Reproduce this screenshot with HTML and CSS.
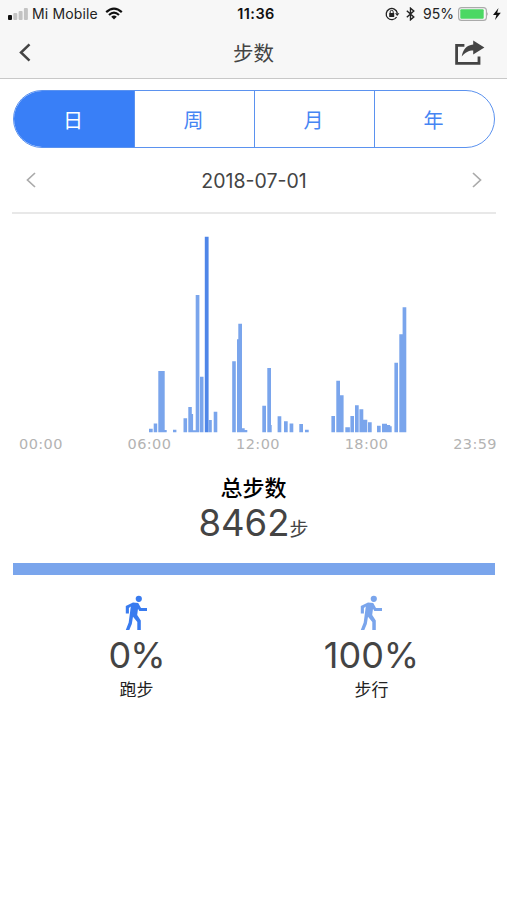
FILE: index.html
```html
<!DOCTYPE html>
<html lang="zh-CN">
<head>
<meta charset="utf-8">
<title>步数</title>
<link rel="stylesheet" href="styles.css">
</head>
<body>
<header class="top">
  <div class="status">
    <div class="status-left">
      <svg class="signal" width="20" height="12" viewBox="0 0 20 12"><rect x="0" y="7" width="4" height="5" rx="1" fill="#111"/><g fill="#c3c3c3"><rect x="5.3" y="5" width="4" height="7" rx="1"/><rect x="10.6" y="3" width="4" height="9" rx="1"/><rect x="15.9" y="0" width="4" height="12" rx="1"/></g></svg>
      <span class="carrier">Mi Mobile</span>
      <svg width="18" height="13" viewBox="0 0 18 13" fill="none" stroke="#111" stroke-width="2.2"><path d="M1.2 5.1Q9-2 16.8 5.1M4 8Q9 3.4 14 8"/><path d="M6.2 9.8Q9 7.4 11.8 9.8L9 12.6Z" fill="#111" stroke="none"/></svg>
    </div>
    <div class="clock">11:36</div>
    <div class="status-right">
      <svg width="15" height="14" viewBox="0 0 15 14" fill="none" stroke="#222"><path d="M11.6 10A5.6 5.6 0 1 1 12.3 6" stroke-width="1.3"/><path d="M10 6.2H14.4L12.2 9Z" fill="#222" stroke="none"/><rect x="4.2" y="6" width="5" height="4" fill="#222" stroke="none"/><path d="M5.2 6V4.8a1.5 1.5 0 0 1 3 0V6"/></svg>
      <svg class="bluetooth" width="9" height="14" viewBox="0 0 9 14" fill="none" stroke="#222" stroke-width="1.4"><path d="M.8 3.8L7.8 10L4.5 12.8V1.2L7.8 4L.8 10.2"/></svg>
      <span class="percent">95%</span>
      <svg class="battery" width="31" height="14" viewBox="0 0 31 14"><rect x=".6" y=".6" width="27.8" height="12.8" rx="3" fill="#f7f7f7" stroke="#aaa" stroke-width="1.1"/><rect x="2.3" y="2.3" width="23.4" height="9.4" rx="1" fill="#4bd863"/><path d="M29.3 5q1.5 2 0 4z" fill="#999"/></svg>
      <svg width="8" height="12" viewBox="0 0 8 12"><path d="M5.5 0L0 7H3.4L2 12L7.8 4.8H4.2Z" fill="#111"/></svg>
    </div>
  </div>
  <nav class="bar">
    <svg width="12" height="19" viewBox="0 0 12 19" fill="none" stroke="#444" stroke-width="2.5"><path d="M10.5 1.3L2 9.5L10.5 17.7"/></svg>
    <h1>步数</h1>
    <svg width="30" height="26" viewBox="0 0 30 26"><path d="M9.4 5.3H1.6V23.4H24V16.5" fill="none" stroke="#444" stroke-width="2.8"/><path d="M18.2.6L29.4 7.4L18.2 14.4V10.6C13.6 10.6 10.5 12.4 6.7 16.6C7.8 9.6 11.3 4.9 18.2 4.4Z" fill="#444"/></svg>
  </nav>
</header>
<main>
  <div class="tabs">
    <div class="tab active">日</div><div class="tab">周</div><div class="tab">月</div><div class="tab">年</div>
  </div>
  <div class="date-row">
    <svg width="10" height="16" viewBox="0 0 10 16"><path d="M9 1L1.5 8L9 15"/></svg>
    <span>2018-07-01</span>
    <svg width="10" height="16" viewBox="0 0 10 16"><path d="M1 1L8.5 8L1 15"/></svg>
  </div>
  <svg class="chart" width="507" height="220" viewBox="0 214 507 220">
    <path class="bars" d="M149 432.3V428.7h3.7V432.3zM153.7 432.3V423.5h3.5V432.3zM158.3 432.3V371h6.4V432.3zM164.7 432.3V430h2V432.3zM173 432.3V429.7h3.4V432.3zM183.5 432.3V418.3h3.6V432.3zM188.3 432.3V407h3.5V432.3zM191.8 432.3V414h1.3V432.3zM193.1 432.3V430.3h2.6V432.3zM195.7 432.3V295h3.7V432.3zM200 432.3V376.7h3.5V432.3zM208.8 432.3V420h3V432.3zM213.7 432.3V411.7h3.6V432.3zM232.2 432.3V361.3h3.6V432.3zM237 432.3V339.3h1.4V432.3zM238.3 432.3V323.7h3.7V432.3zM242 432.3V428.3h2.7V432.3zM244.7 432.3V430h2.6V432.3zM262.3 432.3V405.7h3.7V432.3zM267.3 432.3V368h3.7V432.3zM271 432.3V425h.7V432.3zM277.6 432.3V416.3h3.7V432.3zM284 432.3V421.3h3.7V432.3zM289.6 432.3V423.5h3.7V432.3zM299.3 432.3V424h3.7V432.3zM305 432.3V429.7h3.7V432.3z"/>
    <path class="bars" d="M331.4 432.3V416h3.6V432.3zM336.3 432.3V380.7h3.7V432.3zM340 432.3V395.3h3.6V432.3zM345.3 432.3V427.3h4.6V432.3zM350.4 432.3V416h3.6V432.3zM355 432.3V405.3h3.7V432.3zM359.4 432.3V409.3h3.9V432.3zM363.3 432.3V419.7h4V432.3zM368 432.3V422.3h3.7V432.3zM377 432.3V425.7h3.7V432.3zM382 432.3V423.7h5V432.3zM387 432.3V425h3.2V426.2h1.5V432.3zM394.4 432.3V362.7h3.6V432.3zM399.3 432.3V334.3h3.3V432.3zM402.6 432.3V307.3h3.7V432.3z"/>
    <path class="peak" d="M204.8 432.3V236.7h3.8V432.3z"/>
  </svg>
  <div class="axis"><span>00:00</span><span>06:00</span><span>12:00</span><span>18:00</span><span>23:59</span></div>
  <section class="total">
    <h2>总步数</h2>
    <p><span class="number">8462</span><span class="unit">步</span></p>
  </section>
  <div class="ratio"></div>
  <section class="split">
    <div class="stat run">
      <svg width="24" height="36" viewBox="0 0 24 36"><circle cx="13.8" cy="3.8" r="3.1"/><path d="M8 7.4L13.2 8L16 13H22V16H14.3L13 13.8L12.2 20L15.8 25.5V35H12.3V27L8 21.8L6.8 29L4.3 35H.8L3.7 27.5L5.8 11.5L3.9 13V18.5H.8V11Z"/></svg>
      <strong>0%</strong><span>跑步</span>
    </div>
    <div class="stat walk">
      <svg width="24" height="36" viewBox="0 0 24 36"><circle cx="13.8" cy="3.8" r="3.1"/><path d="M8 7.4L13.2 8L16 13H22V16H14.3L13 13.8L12.2 20L15.8 25.5V35H12.3V27L8 21.8L6.8 29L4.3 35H.8L3.7 27.5L5.8 11.5L3.9 13V18.5H.8V11Z"/></svg>
      <strong>100%</strong><span>步行</span>
    </div>
  </section>
</main>
</body>
</html>
```
FILE: styles.css
```css
* { box-sizing: border-box; }
body { margin: 0; min-height: 900px; background: #fff; color: #444; font-family: Inter, "Noto Sans CJK SC", sans-serif; }
svg { display: block; flex: none; }
h1, h2, p { margin: 0; font-weight: 400; }
.top { height: 79px; background: #f7f7f7; border-bottom: 1px solid #c8c8c8; }
.status { display: grid; grid-template-columns: 1fr auto 1fr; height: 27px; padding: 0 6px 0 8px; align-items: center; color: #222; font-size: 14px; }
.status-left, .status-right { display: flex; align-items: center; }
.status-right { justify-content: flex-end; }
.carrier { margin: 0 7px 0 4px; letter-spacing: .15px; }
.clock { font-weight: 600; font-size: 14.5px; color: #111; letter-spacing: .4px; margin-left: 3px; }
.bluetooth { margin: 0 8px 0 6px; }
.battery { margin: 0 4px; }
.bar { height: 51px; display: flex; align-items: center; justify-content: space-between; padding: 0 22px 0 19px; }
.bar h1 { font-size: 20.5px; line-height: 30px; margin: 2px 0 0 21px; }
.tabs { display: grid; grid-template-columns: repeat(4, 1fr); width: 482px; height: 58px; margin: 11px 0 0 13px; border: 1.5px solid #5b92ef; border-radius: 29px; overflow: hidden; }
.tab { display: flex; align-items: center; justify-content: center; padding-right: 2px; font-size: 20px; color: #4685f3; border-left: 1.5px solid #5b92ef; }
.tab.active { color: #fff; background: #397ff7; border-left: 0; }
.date-row { display: flex; align-items: center; justify-content: space-between; height: 66px; margin: 0 11px 0 12px; padding: 0 14px; border-bottom: 2px solid #e8e8e8; font-size: 19.5px; }
.date-row path { fill: none; stroke: #aaa; stroke-width: 1.7; }
.date-row span { padding-top: 2px; }
.bars { fill: #7aa5ec; }
.peak { fill: #4f86e8; }
.axis { display: flex; justify-content: space-between; padding: 0 10px 0 19px; height: 20px; font: 14.5px/20px "DejaVu Sans", sans-serif; letter-spacing: .4px; color: #b3b3b3; }
.total { height: 109px; padding-top: 19px; text-align: center; }
.total h2 { font-size: 22px; line-height: 30px; font-weight: 500; color: #000; }
.total p { display: flex; justify-content: center; align-items: baseline; height: 40px; line-height: 40px; }
.number { font-size: 36.5px; }
.unit { font-size: 19px; }
.ratio { height: 12px; margin: 0 12px 0 13px; background: #7aa5ec; }
.split { display: grid; grid-template-columns: 235px 235px; padding: 20px 0 0 19px; }
.stat { display: flex; flex-direction: column; align-items: center; }
.stat strong { font-size: 36px; font-weight: 400; line-height: 42px; margin-top: 3px; }
.stat.run strong { letter-spacing: -1px; }
.stat span { font-size: 17px; line-height: 26px; margin-top: 1px; color: #222; }
.run svg { fill: #397bef; }
.walk svg { fill: #7aa5ec; }
```
